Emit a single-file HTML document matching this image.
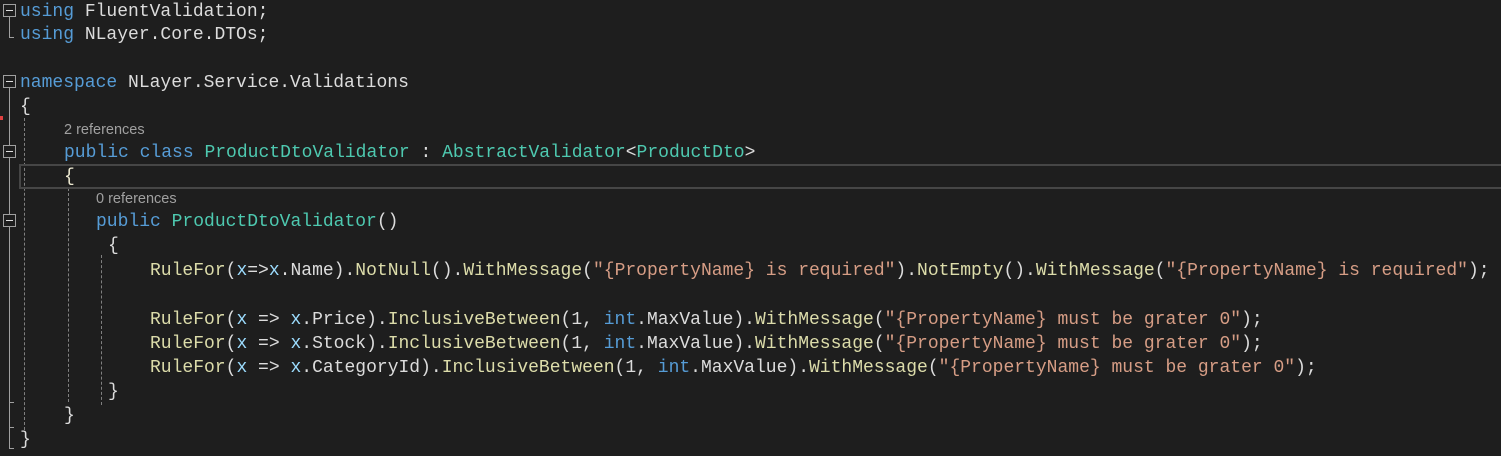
<!DOCTYPE html>
<html><head><meta charset="utf-8"><style>
html,body{margin:0;padding:0;background:#1e1e1e;width:1501px;height:456px;overflow:hidden;position:relative}
.l{position:absolute;height:24px;line-height:24px;font-family:"Liberation Mono",monospace;font-size:18px;color:#dcdcdc;white-space:pre}
.r{position:absolute;font-family:"Liberation Sans",sans-serif;font-size:14.5px;color:#a0a0a0;line-height:18px}
.k{color:#569cd6}.t{color:#4ec9b0}.s{color:#d69d85}.m{color:#dcdcaa}.p{color:#9cdcfe}
.box{position:absolute;left:3px;width:11px;height:11px;border:1px solid #a0a0a0;background:#1e1e1e}
.box:after{content:"";position:absolute;left:2px;top:5px;width:7px;height:1px;background:#ddd}
.v{position:absolute;width:1px;background:#a0a0a0}
.h{position:absolute;height:1px;background:#a0a0a0}
.d{position:absolute;width:0;border-left:1px dashed #808080}
</style></head><body>
<div class="v" style="left:9px;top:17px;height:20px"></div><div class="h" style="left:9px;top:37px;width:5px"></div>
<div class="v" style="left:9px;top:88px;height:360px"></div><div class="h" style="left:9px;top:448px;width:5px"></div>
<div class="h" style="left:9px;top:402px;width:5px"></div><div class="h" style="left:9px;top:427px;width:5px"></div>
<div class="d" style="left:24px;top:118px;height:312px"></div>
<div class="d" style="left:68px;top:188px;height:214px"></div>
<div class="d" style="left:101px;top:255px;height:150px"></div>
<div class="box" style="top:4px"></div>
<div class="box" style="top:75px"></div>
<div class="box" style="top:145px"></div>
<div class="box" style="top:214px"></div>
<div style="position:absolute;left:0;top:116px;width:3px;height:4px;background:#e04040"></div>
<div style="position:absolute;left:19px;top:164px;right:-4px;height:21px;border:2px solid #464646"></div>
<div class="l" style="left:20px;top:0px"><span class="k">using</span> FluentValidation;</div>
<div class="l" style="left:20px;top:23px"><span class="k">using</span> NLayer.Core.DTOs;</div>
<div class="l" style="left:20px;top:71px"><span class="k">namespace</span> NLayer.Service.Validations</div>
<div class="l" style="left:20px;top:95px">{</div>
<div class="r" style="left:64px;top:121px">2 references</div>
<div class="l" style="left:64px;top:141px"><span class="k">public</span> <span class="k">class</span> <span class="t">ProductDtoValidator</span> : <span class="t">AbstractValidator</span>&lt;<span class="t">ProductDto</span>&gt;</div>
<div class="l" style="left:64px;top:165px"><span style="color:#ece8d0">{</span></div>
<div class="r" style="left:96px;top:190px">0 references</div>
<div class="l" style="left:96px;top:210px"><span class="k">public</span> <span class="t">ProductDtoValidator</span>()</div>
<div class="l" style="left:108px;top:234px">{</div>
<div class="l" style="left:150px;top:259px"><span class="m">RuleFor</span>(<span class="p">x</span>=&gt;<span class="p">x</span>.Name).<span class="m">NotNull</span>().<span class="m">WithMessage</span>(<span class="s">"{PropertyName} is required"</span>).<span class="m">NotEmpty</span>().<span class="m">WithMessage</span>(<span class="s">"{PropertyName} is required"</span>);</div>
<div class="l" style="left:150px;top:308px"><span class="m">RuleFor</span>(<span class="p">x</span> =&gt; <span class="p">x</span>.Price).<span class="m">InclusiveBetween</span>(1, <span class="k">int</span>.MaxValue).<span class="m">WithMessage</span>(<span class="s">"{PropertyName} must be grater 0"</span>);</div>
<div class="l" style="left:150px;top:332px"><span class="m">RuleFor</span>(<span class="p">x</span> =&gt; <span class="p">x</span>.Stock).<span class="m">InclusiveBetween</span>(1, <span class="k">int</span>.MaxValue).<span class="m">WithMessage</span>(<span class="s">"{PropertyName} must be grater 0"</span>);</div>
<div class="l" style="left:150px;top:356px"><span class="m">RuleFor</span>(<span class="p">x</span> =&gt; <span class="p">x</span>.CategoryId).<span class="m">InclusiveBetween</span>(1, <span class="k">int</span>.MaxValue).<span class="m">WithMessage</span>(<span class="s">"{PropertyName} must be grater 0"</span>);</div>
<div class="l" style="left:108px;top:380px">}</div>
<div class="l" style="left:64px;top:404px">}</div>
<div class="l" style="left:20px;top:428px">}</div>
</body></html>
